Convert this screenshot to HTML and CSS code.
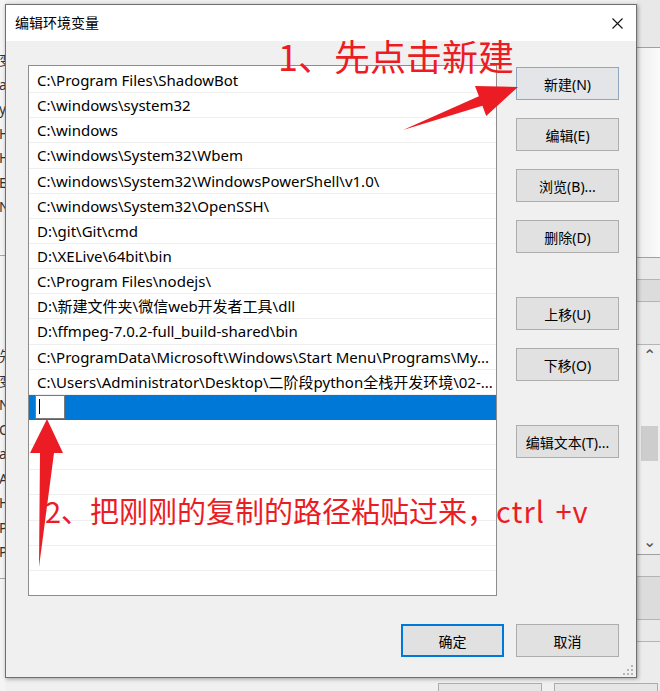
FILE: index.html
```html
<!DOCTYPE html>
<html lang="zh-CN">
<head>
    <meta charset="UTF-8">
    <title>编辑环境变量</title>
    <link rel="stylesheet" href="styles.css">
</head>
<body>

    <!-- window behind the dialog -->
    <div class="back-left">
        <ul class="back-rows top-rows">
            <li>变</li>
            <li>a</li>
            <li>y</li>
            <li>H</li>
            <li>H</li>
            <li>E</li>
            <li>N</li>
        </ul>
        <ul class="back-rows bottom-rows">
            <li>先</li>
            <li>变</li>
            <li>N</li>
            <li>O</li>
            <li>a</li>
            <li>A</li>
            <li>H</li>
            <li>P</li>
            <li>P</li>
        </ul>
    </div>

    <div class="back-right">
        <div class="br-head"></div>
        <div class="br-panel"></div>
        <div class="br-bar"></div>
        <div class="br-bar dark"></div>
        <div class="br-bar tall"></div>
        <div class="br-scroll">
            <span class="arrow">&#8963;</span>
            <span class="thumb"></span>
            <span class="arrow down">&#8964;</span>
        </div>
        <div class="br-bar"></div>
        <div class="br-bar dark tall"></div>
        <div class="br-bar"></div>
    </div>

    <div class="back-bottom">
        <span class="ghost-btn"></span>
        <span class="ghost-btn"></span>
    </div>

    <div class="dialog">
        <div class="titlebar">
            <span class="title">编辑环境变量</span>
            <svg class="close" width="11" height="11" viewBox="0 0 11 11">
                <path d="M0.5 0.5 L10.5 10.5 M10.5 0.5 L0.5 10.5" stroke="#111" stroke-width="1.1"/>
            </svg>
        </div>

        <div class="content">
            <div class="path-list">
                <div class="row">C:\Program Files\ShadowBot</div>
                <div class="row">C:\windows\system32</div>
                <div class="row">C:\windows</div>
                <div class="row">C:\windows\System32\Wbem</div>
                <div class="row">C:\windows\System32\WindowsPowerShell\v1.0\</div>
                <div class="row">C:\windows\System32\OpenSSH\</div>
                <div class="row">D:\git\Git\cmd</div>
                <div class="row">D:\XELive\64bit\bin</div>
                <div class="row">C:\Program Files\nodejs\</div>
                <div class="row">D:\新建文件夹\微信web开发者工具\dll</div>
                <div class="row">D:\ffmpeg-7.0.2-full_build-shared\bin</div>
                <div class="row">C:\ProgramData\Microsoft\Windows\Start Menu\Programs\My...</div>
                <div class="row">C:\Users\Administrator\Desktop\二阶段python全栈开发环境\02-...</div>
                <div class="row selected">
                    <span class="edit-box"><span class="caret"></span></span>
                </div>
                <div class="row"></div>
                <div class="row"></div>
                <div class="row"></div>
                <div class="row"></div>
                <div class="row"></div>
                <div class="row"></div>
                <div class="row"></div>
            </div>

            <div class="side-buttons">
                <button class="btn btn-hot">新建(N)</button>
                <button class="btn">编辑(E)</button>
                <button class="btn">浏览(B)...</button>
                <button class="btn">删除(D)</button>
                <button class="btn spaced">上移(U)</button>
                <button class="btn">下移(O)</button>
                <button class="btn spaced">编辑文本(T)...</button>
            </div>
        </div>

        <div class="footer">
            <button class="btn btn-default">确定</button>
            <button class="btn">取消</button>
        </div>

        <svg class="grip" width="10" height="10" viewBox="0 0 10 10">
            <rect x="8" y="0" width="2" height="2" fill="#b5b5b5"/>
            <rect x="4" y="4" width="2" height="2" fill="#b5b5b5"/>
            <rect x="8" y="4" width="2" height="2" fill="#b5b5b5"/>
            <rect x="0" y="8" width="2" height="2" fill="#b5b5b5"/>
            <rect x="4" y="8" width="2" height="2" fill="#b5b5b5"/>
            <rect x="8" y="8" width="2" height="2" fill="#b5b5b5"/>
        </svg>
    </div>

    <!-- red hints drawn on top -->
    <svg class="marks" width="660" height="691" viewBox="0 0 660 691">
        <polygon points="403,130 478.9,96.3 475,86 518,87 486.2,116 482.4,105.7" fill="#ec1c24"/>
        <polygon points="47,419 63,453 54,453 39,567 40,453 30,453" fill="#ec1c24"/>
    </svg>
    <div class="note note-one">1、先点击新建</div>
    <div class="note note-two">2、把刚刚的复制的路径粘贴过来，<span class="latin">ctrl +v</span></div>

</body>
</html>
```

FILE: styles.css
```css
body {
    margin: 0;
    width: 660px;
    height: 691px;
    overflow: hidden;
    position: relative;
    background-color: #f0f0f0;
    font-family: "Noto Sans", "Noto Sans CJK SC", sans-serif;
    color: #000;
}

/* --- windows in the background --- */
.back-left {
    position: absolute;
    left: 0;
    top: 0;
    width: 5px;
    height: 691px;
    overflow: hidden;
    background-color: #f4f4f4;
}

.back-rows {
    list-style: none;
    margin: 0;
    padding: 0;
    font-size: 14px;
    line-height: 24.5px;
    color: #333;
}

.top-rows {
    padding-top: 48px;
    height: 207px;
    border-bottom: 1px solid #a8a8a8;
}

.bottom-rows {
    padding-top: 88px;
    height: 234px;
    border-bottom: 1px solid #a8a8a8;
}

    .back-rows li {
        margin-left: -1px;
        white-space: nowrap;
    }

.back-right {
    position: absolute;
    left: 637px;
    top: 0;
    width: 23px;
    height: 691px;
    background-color: #ececec;
    display: flex;
    flex-direction: column;
}

.br-head {
    height: 47px;
    background-color: #e8e8e8;
    border-bottom: 1px solid #a0a0a0;
}

.br-panel {
    height: 209px;
    background: linear-gradient(to right, #ededed, #fbfbfb);
    border-bottom: 1px solid #a0a0a0;
}

.br-bar {
    height: 21px;
    background-color: #e9e9e9;
    border-bottom: 1px solid #b4b4b4;
}

    .br-bar.dark {
        background-color: #dcdcdc;
    }

    .br-bar.tall {
        height: 42px;
    }

.br-scroll {
    height: 209px;
    background-color: #efefef;
    border-bottom: 1px solid #a0a0a0;
    position: relative;
    color: #555;
}

    .br-scroll .arrow {
        position: absolute;
        left: 6px;
        top: 2px;
        font-size: 16px;
        line-height: 16px;
    }

    .br-scroll .arrow.down {
        top: 188px;
    }

    .br-scroll .thumb {
        position: absolute;
        left: 4px;
        top: 81px;
        width: 17px;
        height: 35px;
        background-color: #cdcdcd;
    }

.back-bottom {
    position: absolute;
    left: 0;
    top: 678px;
    width: 660px;
    height: 13px;
    display: flex;
    padding-left: 438px;
    gap: 12px;
    box-sizing: border-box;
}

.ghost-btn {
    margin-top: 5px;
    width: 102px;
    height: 20px;
    border: 1px solid #adadad;
    background-color: #e6e6e6;
}

/* --- dialog --- */
.dialog {
    position: absolute;
    left: 5px;
    top: 4px;
    width: 632px;
    height: 674px;
    box-sizing: border-box;
    border: 1px solid #6f6f6f;
    background-color: #f0f0f0;
    box-shadow: 1px 1px 4px rgba(0, 0, 0, 0.35);
    display: flex;
    flex-direction: column;
}

.titlebar {
    height: 36px;
    background-color: #fff;
    display: flex;
    align-items: center;
    justify-content: space-between;
    padding: 0 13px 0 9px;
    flex-shrink: 0;
}

.title {
    font-size: 14px;
    margin-top: -2px;
}

.content {
    display: flex;
    padding: 24px 0 0 22px;
    gap: 19px;
}

.path-list {
    width: 469px;
    height: 531px;
    box-sizing: border-box;
    border: 1px solid #8d8d8d;
    background-color: #fff;
    padding-top: 2px;
    overflow: hidden;
}

.row {
    height: 25.15px;
    box-sizing: border-box;
    border-bottom: 1px solid #efefef;
    padding-left: 8px;
    font-size: 15px;
    line-height: 24px;
    white-space: nowrap;
    overflow: hidden;
}

    .row.selected {
        background-color: #0078d7;
        border-bottom-color: #0078d7;
        padding-left: 6px;
        display: flex;
        align-items: center;
    }

.edit-box {
    width: 30px;
    height: 24px;
    box-sizing: border-box;
    border: 1px solid #7a7a7a;
    background-color: #fff;
    display: flex;
    align-items: center;
    padding-left: 3px;
}

.caret {
    width: 1px;
    height: 15px;
    background-color: #000;
}

.side-buttons {
    display: flex;
    flex-direction: column;
    gap: 18px;
    padding-top: 2px;
}

.btn {
    width: 103px;
    height: 33px;
    box-sizing: border-box;
    border: 1px solid #adadad;
    background-color: #e1e1e1;
    font-family: "Noto Sans", "Noto Sans CJK SC", sans-serif;
    font-size: 14px;
    color: #000;
    padding: 0;
    cursor: pointer;
}

    .btn.spaced {
        margin-top: 26px;
    }

.btn-hot {
    border-color: #8ea6c0;
    background-color: #e3e5e9;
}

.btn-default {
    border: 2px solid #0078d7;
}

.footer {
    display: flex;
    justify-content: flex-end;
    gap: 12px;
    padding: 28px 17px 0 0;
}

.grip {
    position: absolute;
    right: 3px;
    bottom: 2px;
}

/* --- red hints --- */
.marks {
    position: absolute;
    left: 0;
    top: 0;
    pointer-events: none;
}

.note {
    position: absolute;
    font-family: "Noto Sans CJK SC", sans-serif;
    color: #ec1c24;
    white-space: nowrap;
    line-height: 1;
}

.note-one {
    left: 278px;
    top: 37px;
    font-size: 36px;
}

.note-two {
    left: 45px;
    top: 496px;
    font-size: 29px;
}

    .note-two .latin {
        letter-spacing: 1px;
        word-spacing: 3px;
    }
```
